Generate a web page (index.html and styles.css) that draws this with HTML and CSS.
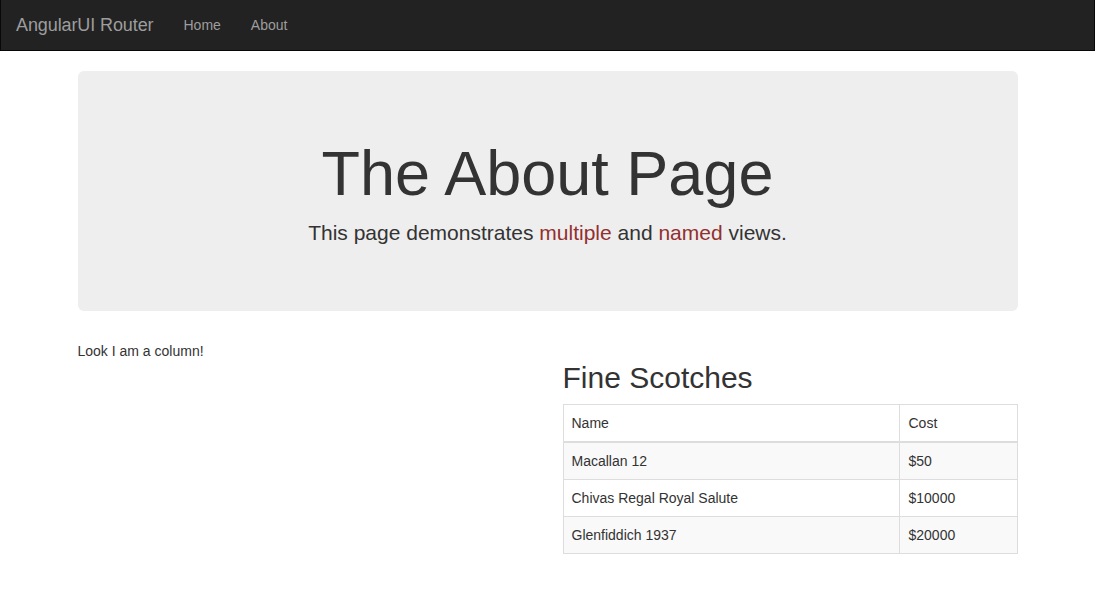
FILE: index.html
```html
<!DOCTYPE html>
<html lang="en">
<head>
  <meta charset="UTF-8">
  <meta name="viewport" content="width=device-width, initial-scale=1.0">
  <title>AngularUI Router</title>
  <link rel="stylesheet" href="styles.css">
</head>
<body>

  <nav class="navbar">
    <div class="navbar-inner">
      <a class="brand" href="#">AngularUI Router</a>
      <ul class="nav">
        <li><a href="#">Home</a></li>
        <li><a href="#">About</a></li>
      </ul>
    </div>
  </nav>

  <div class="container">
    <div class="jumbotron">
      <h1>The About Page</h1>
      <p>This page demonstrates <span class="text-danger">multiple</span> and <span class="text-danger">named</span> views.</p>
    </div>

    <div class="row">
      <div class="col">
        Look I am a column!
      </div>
      <div class="col">
        <h2>Fine Scotches</h2>
        <table class="table">
          <thead>
            <tr>
              <td>Name</td>
              <td>Cost</td>
            </tr>
          </thead>
          <tbody>
            <tr>
              <td>Macallan 12</td>
              <td>$50</td>
            </tr>
            <tr>
              <td>Chivas Regal Royal Salute</td>
              <td>$10000</td>
            </tr>
            <tr>
              <td>Glenfiddich 1937</td>
              <td>$20000</td>
            </tr>
          </tbody>
        </table>
      </div>
    </div>
  </div>

</body>
</html>
```

FILE: styles.css
```css
* {
  box-sizing: border-box;
}

body {
  margin: 0;
  font-family: "Liberation Sans", Arial, sans-serif;
  font-size: 14px;
  line-height: 1.42857143;
  color: #333;
  background: #fff;
}

a {
  text-decoration: none;
}

/* navbar */
.navbar {
  background-color: #222;
  border: 1px solid #080808;
  border-top: 0;
  min-height: 51px;
  margin-bottom: 20px;
}

.navbar-inner {
  display: flex;
  align-items: center;
  padding: 0 15px 0 0;
}

.brand {
  padding: 15px;
  font-size: 18px;
  line-height: 20px;
  height: 50px;
  color: #9d9d9d;
  letter-spacing: -0.1px;
}

.nav {
  display: flex;
  list-style: none;
  margin: 0;
  padding: 0;
}

.nav a {
  display: block;
  padding: 15px;
  line-height: 20px;
  color: #9d9d9d;
}

.nav a:hover {
  color: #fff;
}

/* layout */
.container {
  width: 970px;
  margin: 0 auto;
  padding: 0 15px;
}

.jumbotron {
  background-color: #eee;
  border-radius: 6px;
  padding: 48px 60px;
  margin-bottom: 30px;
  text-align: center;
}

.jumbotron h1 {
  font-size: 63px;
  font-weight: 500;
  line-height: 1.1;
  margin: 20px 0 10px;
}

.jumbotron p {
  font-size: 21px;
  font-weight: 200;
  margin: 0 0 15px;
}

.text-danger {
  color: #93302f;
}

.row {
  display: flex;
  margin: 0 -15px;
}

.col {
  width: 50%;
  padding: 0 15px;
}

h2 {
  font-size: 30px;
  font-weight: 500;
  line-height: 1.1;
  margin: 20px 0 10px;
}

/* table */
.table {
  width: 100%;
  border-collapse: collapse;
  border: 1px solid #ddd;
  margin-bottom: 20px;
}

.table td {
  padding: 8px;
  border: 1px solid #ddd;
  line-height: 1.42857143;
}

.table thead td {
  border-bottom-width: 2px;
}

.table tbody tr:nth-child(odd) {
  background-color: #f9f9f9;
}
```
